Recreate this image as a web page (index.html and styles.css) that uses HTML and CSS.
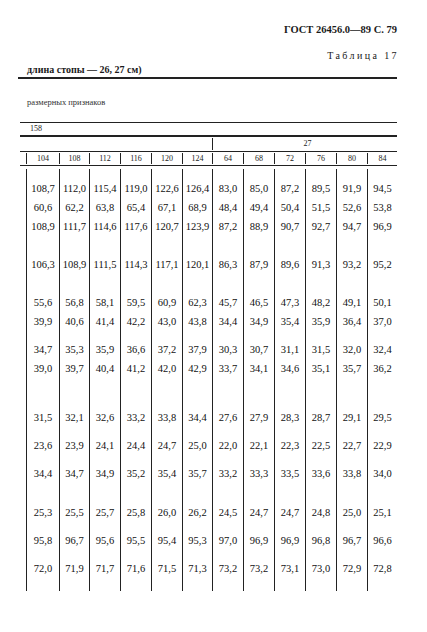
FILE: index.html
```html
<!DOCTYPE html>
<html lang="ru">
<head>
<meta charset="utf-8">
<title>ГОСТ 26456.0—89 С. 79</title>
<link rel="stylesheet" href="styles.css">
</head>
<body>
<div class="page">
  <div class="gost">ГОСТ 26456.0—89 С. 79</div>
  <div class="tabl">Таблица 17</div>
  <div class="caption">длина стопы — 26, 27 см)</div>
  <div class="rule-thick"></div>
  <div class="sub">размерных признаков</div>
  <div class="table">
    <div class="r158">158</div>
    <div class="r27"><div class="r27-left"></div><div class="r27-right">27</div></div>
    <div class="grid hdr">
      <div>104</div><div>108</div><div>112</div><div>116</div><div>120</div><div>124</div>
      <div>64</div><div>68</div><div>72</div><div>76</div><div>80</div><div>84</div>
    </div>
    <div class="body">
      <div class="grid row h26"><div>108,7</div><div>112,0</div><div>115,4</div><div>119,0</div><div>122,6</div><div>126,4</div><div>83,0</div><div>85,0</div><div>87,2</div><div>89,5</div><div>91,9</div><div>94,5</div></div>
      <div class="grid row h19"><div>60,6</div><div>62,2</div><div>63,8</div><div>65,4</div><div>67,1</div><div>68,9</div><div>48,4</div><div>49,4</div><div>50,4</div><div>51,5</div><div>52,6</div><div>53,8</div></div>
      <div class="grid row h19"><div>108,9</div><div>111,7</div><div>114,6</div><div>117,6</div><div>120,7</div><div>123,9</div><div>87,2</div><div>88,9</div><div>90,7</div><div>92,7</div><div>94,7</div><div>96,9</div></div>
      <div class="grid row h38"><div>106,3</div><div>108,9</div><div>111,5</div><div>114,3</div><div>117,1</div><div>120,1</div><div>86,3</div><div>87,9</div><div>89,6</div><div>91,3</div><div>93,2</div><div>95,2</div></div>
      <div class="grid row h38"><div>55,6</div><div>56,8</div><div>58,1</div><div>59,5</div><div>60,9</div><div>62,3</div><div>45,7</div><div>46,5</div><div>47,3</div><div>48,2</div><div>49,1</div><div>50,1</div></div>
      <div class="grid row h19"><div>39,9</div><div>40,6</div><div>41,4</div><div>42,2</div><div>43,0</div><div>43,8</div><div>34,4</div><div>34,9</div><div>35,4</div><div>35,9</div><div>36,4</div><div>37,0</div></div>
      <div class="grid row h28"><div>34,7</div><div>35,3</div><div>35,9</div><div>36,6</div><div>37,2</div><div>37,9</div><div>30,3</div><div>30,7</div><div>31,1</div><div>31,5</div><div>32,0</div><div>32,4</div></div>
      <div class="grid row h19"><div>39,0</div><div>39,7</div><div>40,4</div><div>41,2</div><div>42,0</div><div>42,9</div><div>33,7</div><div>34,1</div><div>34,6</div><div>35,1</div><div>35,7</div><div>36,2</div></div>
      <div class="grid row h49"><div>31,5</div><div>32,1</div><div>32,6</div><div>33,2</div><div>33,8</div><div>34,4</div><div>27,6</div><div>27,9</div><div>28,3</div><div>28,7</div><div>29,1</div><div>29,5</div></div>
      <div class="grid row h28"><div>23,6</div><div>23,9</div><div>24,1</div><div>24,4</div><div>24,7</div><div>25,0</div><div>22,0</div><div>22,1</div><div>22,3</div><div>22,5</div><div>22,7</div><div>22,9</div></div>
      <div class="grid row h28"><div>34,4</div><div>34,7</div><div>34,9</div><div>35,2</div><div>35,4</div><div>35,7</div><div>33,2</div><div>33,3</div><div>33,5</div><div>33,6</div><div>33,8</div><div>34,0</div></div>
      <div class="grid row h39"><div>25,3</div><div>25,5</div><div>25,7</div><div>25,8</div><div>26,0</div><div>26,2</div><div>24,5</div><div>24,7</div><div>24,7</div><div>24,8</div><div>25,0</div><div>25,1</div></div>
      <div class="grid row h28"><div>95,8</div><div>96,7</div><div>95,6</div><div>95,5</div><div>95,4</div><div>95,3</div><div>97,0</div><div>96,9</div><div>96,9</div><div>96,8</div><div>96,7</div><div>96,6</div></div>
      <div class="grid row h28"><div>72,0</div><div>71,9</div><div>71,7</div><div>71,6</div><div>71,5</div><div>71,3</div><div>73,2</div><div>73,2</div><div>73,1</div><div>73,0</div><div>72,9</div><div>72,8</div></div>
      <div class="grid row h16"><div></div><div></div><div></div><div></div><div></div><div></div><div></div><div></div><div></div><div></div><div></div><div></div></div>
    </div>
  </div>
</div>
</body>
</html>
```
FILE: styles.css
```css
html, body {
  margin: 0;
  padding: 0;
  background: #ffffff;
}
body {
  font-family: "Liberation Serif", "DejaVu Serif", serif;
  color: #1a1a1a;
}
.page {
  width: 427px;
  height: 632px;
  box-sizing: border-box;
  padding: 24px 30px 0 18px;
  overflow: hidden;
}
.gost {
  text-align: right;
  font-weight: bold;
  font-size: 10.5px;
  line-height: 12px;
  height: 12px;
}
.tabl {
  margin-top: 14px;
  text-align: right;
  font-size: 10px;
  line-height: 12px;
  height: 12px;
  letter-spacing: 2.4px;
  margin-right: -2px;
}
.caption {
  margin-top: 2px;
  padding-left: 9px;
  font-weight: bold;
  font-size: 10px;
  line-height: 12px;
  height: 12px;
}
.rule-thick {
  margin-top: 1px;
  height: 2px;
  background: #222;
}
.sub {
  margin-top: 18px;
  padding-left: 9px;
  font-size: 8.5px;
  line-height: 10px;
  height: 10px;
  color: #333;
}
.table {
  margin-top: 15px;
  margin-left: 2px;
  width: 377px;
  border-top: 1px solid #222;
}
.r158 {
  height: 12px;
  line-height: 12px;
  font-size: 8px;
  padding-left: 10px;
  border-bottom: 2px solid #222;
}
.r27 {
  display: flex;
  height: 14px;
  border-bottom: 1px solid #222;
}
.r27-left {
  width: 192px;
}
.r27-right {
  flex: 1;
  border-left: 1px solid #222;
  font-size: 8px;
  line-height: 14px;
  text-align: center;
  padding-left: 5px;
  margin: 1px 0;
  line-height: 12px;
}
.grid {
  display: grid;
  grid-template-columns: 33px 30px 31px 31px 31px 30px 31px 31px 31px 31px 31px 30px;
  padding-left: 6px;
}
.grid > div {
  border-left: 1px solid #222;
  text-align: center;
}
.hdr {
  height: 13px;
  border-bottom: 1px solid #222;
}
.hdr > div {
  font-size: 8px;
  line-height: 13px;
  margin: 1px 0;
  line-height: 11px;
}
.body {
  margin-top: 3px;
}
.row > div {
  display: flex;
  align-items: flex-end;
  justify-content: center;
  font-size: 10.5px;
  line-height: 12px;
  color: #111;
}
.h16 { height: 16px; }
.h19 { height: 19px; }
.h26 { height: 26px; }
.h28 { height: 28px; }
.h38 { height: 38px; }
.h39 { height: 39px; }
.h49 { height: 49px; }
```
